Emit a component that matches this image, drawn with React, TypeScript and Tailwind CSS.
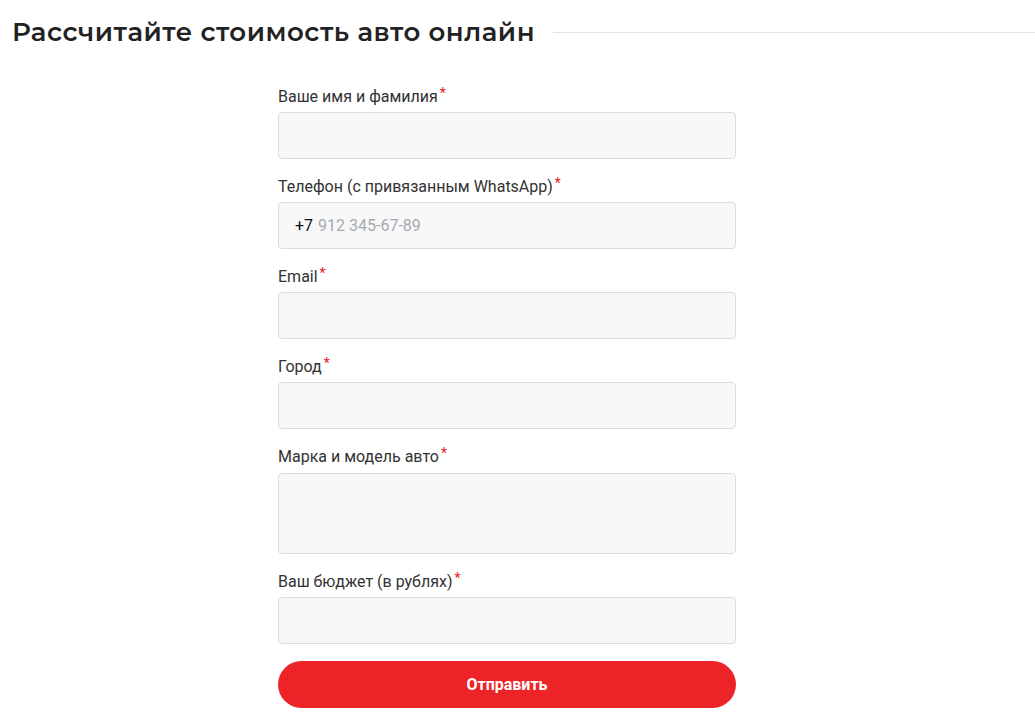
const fields: { label: string; kind: "input" | "phone" | "textarea" }[] = [
  { label: "Ваше имя и фамилия", kind: "input" },
  { label: "Телефон (с привязанным WhatsApp)", kind: "phone" },
  { label: "Email", kind: "input" },
  { label: "Город", kind: "input" },
  { label: "Марка и модель авто", kind: "textarea" },
  { label: "Ваш бюджет (в рублях)", kind: "input" },
];

export default function App() {
  return (
    <div className="min-h-screen bg-white font-['Roboto',sans-serif] text-[#333]">
      <header className="flex items-center gap-[18px] pl-[12px] pt-[14px]">
        <h1 className="whitespace-nowrap font-['Montserrat','Open_Sans',sans-serif] text-[26px] font-semibold leading-[36px] tracking-[0.55px] text-[#222]">
          Рассчитайте стоимость авто онлайн
        </h1>
        <div className="h-px flex-1 bg-[#e2e2e2]" />
      </header>

      <div className="flex justify-center pr-[21px]">
        <form className="mt-[34px] w-[458px]" onSubmit={(e) => e.preventDefault()}>
          {fields.map((f) => (
            <div key={f.label} className="mb-[15px]">
              <label
                className={`block pt-px text-[16px] leading-[24px] text-[#333] ${
                  f.kind === "textarea" ? "mb-[4px] mt-px" : "mb-[3px]"
                }`}
              >
                {f.label}
                <span className="relative -top-[4px] ml-[2px] text-[14px] text-[#ec1c24]">*</span>
              </label>
              {f.kind === "textarea" ? (
                <textarea className="block h-[81px] w-full resize-none rounded-[4px] border border-[#dcdcdc] bg-[#f8f8f8] px-4 py-3 outline-none" />
              ) : f.kind === "phone" ? (
                <div className="flex h-[47px] w-full items-center rounded-[4px] border border-[#dcdcdc] bg-[#f8f8f8] px-4 text-[16px]">
                  <span className="text-[#111]">+7</span>
                  <span className="ml-[5px] text-[#a3a9b1]">912 345-67-89</span>
                </div>
              ) : (
                <input className="block h-[47px] w-full rounded-[4px] border border-[#dcdcdc] bg-[#f8f8f8] px-4 outline-none" />
              )}
            </div>
          ))}
          <button
            type="submit"
            className="mt-[17px] block h-[47px] w-full rounded-full bg-[#ec2427] text-[16px] font-bold text-white"
          >
            Отправить
          </button>
        </form>
      </div>
    </div>
  );
}
